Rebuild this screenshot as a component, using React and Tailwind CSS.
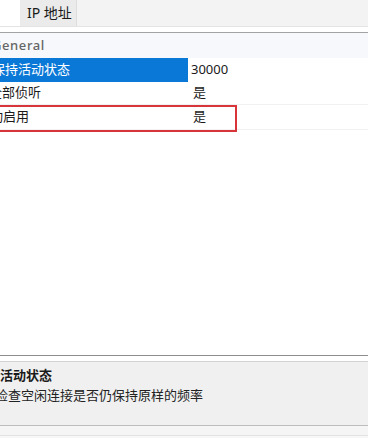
export default function App() {
  const font = { fontFamily: '"Noto Sans", "Noto Sans CJK SC", sans-serif' };

  return (
    <div className="relative h-[438px] w-[368px] overflow-hidden bg-white text-[13px] text-[#1a1a1a]" style={font}>
      {/* tab strip */}
      <div className="flex h-[26px] bg-[#f3f3f3]">
        <div className="w-[20px] bg-white" />
        <div className="flex w-[57px] items-center border-r border-[#dedede] bg-[#ebebeb] pl-[7px] text-[14px] leading-none">
          IP 地址
        </div>
      </div>
      <div className="h-px bg-[#e3e3e3]" />
      <div className="h-[5px] bg-white" />
      <div className="h-px bg-[#a3a3a3]" />

      {/* property grid */}
      <div className="relative h-[322px] bg-white">
        <div className="flex h-[25px] items-center bg-[#f6f8fb] text-[#666666]">
          <span className="ml-[-8px] font-medium tracking-[0.6px]">General</span>
        </div>
        <div className="flex h-[24px]">
          <div className="flex w-[188px] items-center overflow-hidden bg-[#0a78d7] text-white">
            <span className="ml-[-8px] whitespace-nowrap">保持活动状态</span>
          </div>
          <div className="flex flex-1 items-center pl-[3px]">30000</div>
        </div>
        <div className="flex h-[23px] border-b border-[#f1f1f1]">
          <div className="flex w-[188px] items-center overflow-hidden">
            <span className="ml-[-11px] whitespace-nowrap">全部侦听</span>
          </div>
          <div className="flex flex-1 items-center pl-[5px]">是</div>
        </div>
        <div className="flex h-[25px] border-b border-[#f1f1f1]">
          <div className="flex w-[188px] items-center overflow-hidden">
            <span className="ml-[-10px] whitespace-nowrap">动启用</span>
          </div>
          <div className="flex flex-1 items-center pl-[5px]">是</div>
        </div>

        {/* red highlight */}
        <div className="absolute left-[-4px] top-[72px] h-[27px] w-[241px] border-2 border-[#d8353b]" />
      </div>

      {/* description panel */}
      <div className="h-px bg-[#8e8e8e]" />
      <div className="h-[5px] bg-white" />
      <div className="h-px bg-[#d2d2d2]" />
      <div className="flex h-[63px] flex-col bg-[#f0f0f0] pt-[3px]">
        <div className="ml-[-26px] whitespace-nowrap font-bold leading-[20px]">保持活动状态</div>
        <div className="ml-[-5px] whitespace-nowrap leading-[20px] text-[#222222]">检查空闲连接是否仍保持原样的频率</div>
      </div>
      <div className="h-px bg-[#bdbdbd]" />
      <div className="h-[9px] bg-[#f5f5f5]" />
      <div className="h-px bg-[#e2e2e2]" />
      <div className="h-[3px] bg-[#f7f7f7]" />
    </div>
  );
}
